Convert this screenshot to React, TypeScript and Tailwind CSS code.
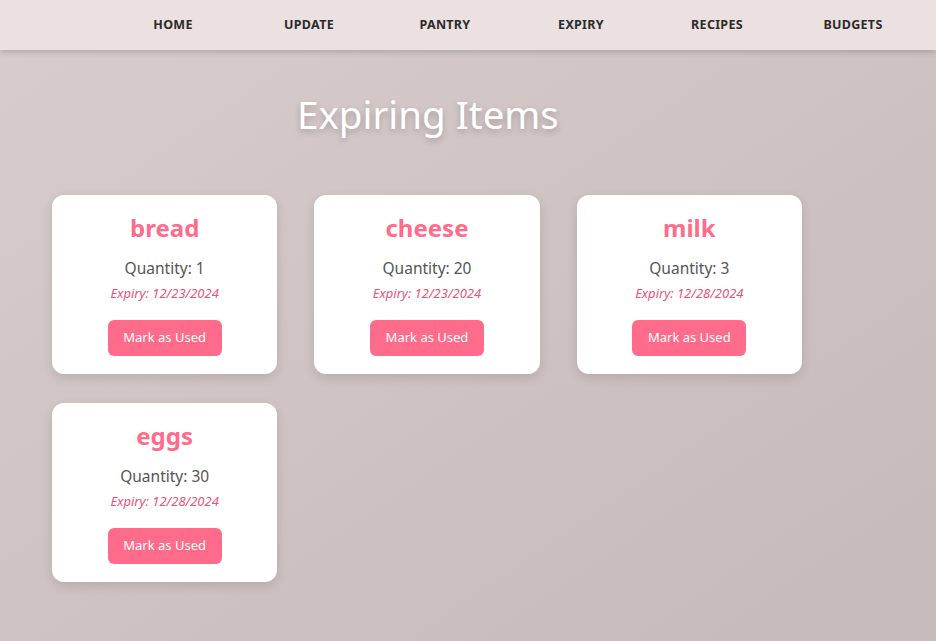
const navItems = ['Home', 'Update', 'Pantry', 'Expiry', 'Recipes', 'Budgets']

const items = [
  { name: 'bread', quantity: 1, expiry: '12/23/2024' },
  { name: 'cheese', quantity: 20, expiry: '12/23/2024' },
  { name: 'milk', quantity: 3, expiry: '12/28/2024' },
  { name: 'eggs', quantity: 30, expiry: '12/28/2024' },
]

const App = () => (
  <div
    className="min-h-[641px] bg-gradient-to-br from-[#d8cccc] to-[#c6b9b9] font-['Noto_Sans',sans-serif]"
  >
    <Nav />
    <main className="px-[52px] pb-10">
      <h1 className="pt-[41px] pl-[245px] text-[38.5px] leading-[46px] font-normal text-white [text-shadow:0_3px_6px_rgba(0,0,0,0.22)]">
        Expiring Items
      </h1>
      <div className="mt-[58px] grid w-[750px] grid-cols-3 gap-x-[37px] gap-y-[29px]">
        {items.map((item) => (
          <ItemCard key={item.name} {...item} />
        ))}
      </div>
    </main>
  </div>
)

export default App

const Nav = () => (
  <nav className="flex h-[50px] items-center bg-[#ebe1e0] pl-[105px] shadow-[0_2px_6px_rgba(0,0,0,0.18)]">
    {navItems.map((label) => (
      <a
        key={label}
        href="#"
        className="w-[136px] text-center text-[12.5px] font-bold tracking-[0.3px] text-[#2b2b2b] uppercase"
      >
        {label}
      </a>
    ))}
  </nav>
)

const ItemCard = ({
  name,
  quantity,
  expiry,
}: {
  name: string
  quantity: number
  expiry: string
}) => (
  <div className="flex h-[179px] flex-col items-center rounded-xl bg-white pt-[18px] shadow-[0_4px_12px_rgba(0,0,0,0.12)]">
    <h3 className="text-[24px] leading-[30px] font-bold text-[#ff6b8b]">{name}</h3>
    <p className="mt-[14px] text-[15.5px] leading-[22px] text-[#555]">Quantity: {quantity}</p>
    <p className="mt-[5px] text-[13px] leading-[18px] text-[#e8557a] italic">Expiry: {expiry}</p>
    <button className="mt-[18px] h-[36px] w-[114px] rounded-md bg-[#ff6b8b] text-[13px] text-white">
      Mark as Used
    </button>
  </div>
)
